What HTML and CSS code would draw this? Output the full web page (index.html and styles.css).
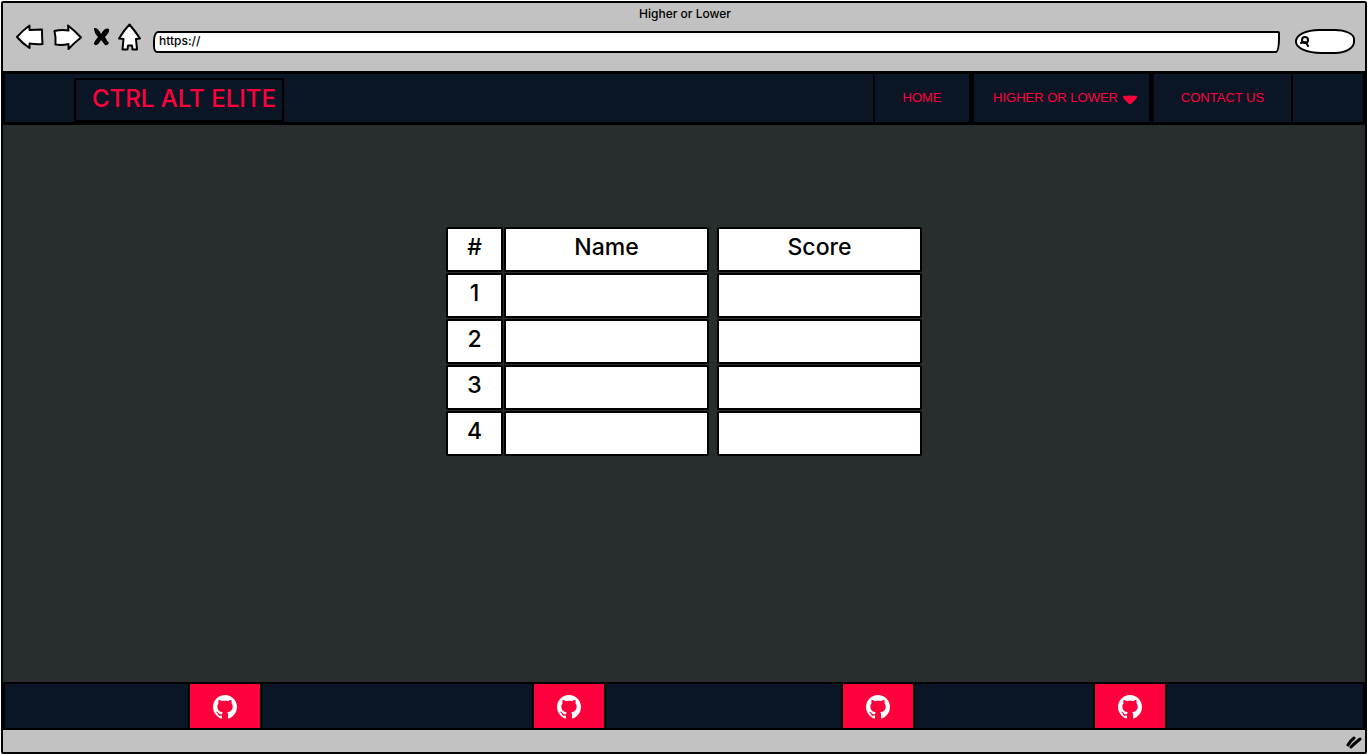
FILE: index.html
```html
<!DOCTYPE html>
<html lang="en">
<head>
<meta charset="utf-8">
<title>Higher or Lower</title>
<link rel="stylesheet" href="styles.css">
</head>
<body>
<svg class="defs" aria-hidden="true">
  <symbol id="github" viewBox="0 0 16 16"><path d="M8 0C3.58 0 0 3.58 0 8c0 3.54 2.29 6.53 5.47 7.59.4.07.55-.17.55-.38 0-.19-.01-.82-.01-1.49-2.01.37-2.53-.49-2.69-.94-.09-.23-.48-.94-.82-1.13-.28-.15-.68-.52-.01-.53.63-.01 1.08.58 1.23.82.72 1.21 1.87.87 2.33.66.07-.52.28-.87.51-1.07-1.78-.2-3.64-.89-3.64-3.95 0-.87.31-1.59.82-2.15-.08-.2-.36-1.02.08-2.12 0 0 .67-.21 2.2.82.64-.18 1.32-.27 2-.27s1.36.09 2 .27c1.53-1.04 2.2-.82 2.2-.82.44 1.1.16 1.92.08 2.12.51.56.82 1.27.82 2.15 0 3.07-1.87 3.75-3.65 3.95.29.25.54.73.54 1.48 0 1.07-.01 1.93-.01 2.2 0 .21.15.46.55.38A8.01 8.01 0 0 0 16 8c0-4.42-3.58-8-8-8z"/></symbol>
</svg>
<div class="window">
  <header class="chrome">
    <div class="chrome-title">Higher or Lower</div>
    <div class="toolbar">
      <button class="tool" aria-label="Back"><svg class="icon-arrow" viewBox="0 0 30 28"><path d="M2 14Q7 8 14.500 2.500L14.500 7L27 6.500Q27 14 27.500 21Q21 21.500 14.500 20.500L14.500 25Q7 20 2 14Z"/></svg></button>
      <button class="tool" aria-label="Forward"><svg class="icon-arrow" viewBox="0 0 30 28"><path d="M1.500 8Q8 6.500 15.500 7.500L15 2.500Q22 8 28 14.500Q21 20 15.500 26L15.500 21Q9 22.500 2.500 21.500Q3 14 1.500 8Z"/></svg></button>
      <button class="tool tool-stop" aria-label="Stop"><svg class="icon-stop" viewBox="0 0 18 22"><path d="M2 2Q6 1 9 8Q13 1 17 3Q18 6 13 11Q15 15 17 17Q15 20 13 19L9 14Q6 20 3 19Q0 18 6 11Q2 7 2 2Z"/></svg></button>
      <button class="tool" aria-label="Home"><svg class="icon-home" viewBox="0 0 24 30"><path d="M12.500 2.500Q18 9 23 16.500L19 17Q19.500 22 20 27.500L15.500 27.500L15 23.500L11 23.500L10.500 27.500L5.500 27.500Q6 22 6.500 17L2 16.500Q7 8 12.500 2.500Z"/></svg></button>
      <input class="address" type="text" value="https://" aria-label="Address">
      <label class="search">
        <svg class="icon-search" viewBox="0 0 12 14"><circle cx="6" cy="6" r="3"/><path d="M2 9L4 8M6 8L8 10L9 12"/></svg>
        <input class="search-input" type="text" aria-label="Search">
      </label>
    </div>
  </header>
  <nav class="navbar">
    <a class="brand" href="#">CTRL ALT ELITE</a>
    <div class="nav-links">
      <a class="nav-link nav-home" href="#">HOME</a>
      <a class="nav-link nav-game" href="#">HIGHER OR LOWER <svg class="icon-caret" viewBox="0 0 16 10"><path d="M1 1Q8 0 15 1Q16 3 9 9L7 9Q0 3 1 1Z"/></svg></a>
      <a class="nav-link nav-contact" href="#">CONTACT US</a>
    </div>
  </nav>
  <main class="content">
    <table class="scores">
      <thead>
        <tr><th scope="col">#</th><th scope="col">Name</th><th scope="col">Score</th></tr>
      </thead>
      <tbody>
        <tr><td>1</td><td></td><td></td></tr>
        <tr><td>2</td><td></td><td></td></tr>
        <tr><td>3</td><td></td><td></td></tr>
        <tr><td>4</td><td></td><td></td></tr>
      </tbody>
    </table>
  </main>
  <footer class="footer">
    <span></span>
    <a class="social" href="#" aria-label="GitHub"><svg class="icon-github"><use href="#github"/></svg></a>
    <span></span>
    <a class="social" href="#" aria-label="GitHub"><svg class="icon-github"><use href="#github"/></svg></a>
    <span></span>
    <a class="social" href="#" aria-label="GitHub"><svg class="icon-github"><use href="#github"/></svg></a>
    <span></span>
    <a class="social" href="#" aria-label="GitHub"><svg class="icon-github"><use href="#github"/></svg></a>
    <span></span>
  </footer>
  <div class="statusbar">
    <svg class="icon-grip" viewBox="0 0 18 14"><path d="M3 9Q5 5 9 2M6 11Q9 8 15 3"/></svg>
  </div>
</div>
</body>
</html>
```

FILE: styles.css
```css
* { box-sizing: border-box; }

body {
  margin: 0;
  background: #fff;
  color: #000;
  font-family: "Liberation Sans", Arial, sans-serif;
  font-size: 13px;
}

.defs { position: absolute; width: 0; height: 0; }
svg { display: block; flex: none; }

.window {
  display: flex;
  flex-direction: column;
  min-height: calc(100vh - 2px);
  margin: 1px 1px 0;
  border: 2px solid #000;
  border-radius: 2px;
  background: #282d2d;
}

.chrome {
  height: 68px;
  padding: 3px 10px 0 12px;
  background: #c2c2c2;
}

.chrome-title {
  font-family: Inter, sans-serif;
  font-size: 12px;
  font-weight: 500;
  line-height: 16px;
  text-align: center;
}

.toolbar {
  display: flex;
  align-items: center;
  height: 30px;
}

.tool {
  margin: 0 8px 0 0;
  padding: 0;
  border: 0;
  background: none;
}

.tool-stop { margin: 0 7px 0 1px; }

.tool path {
  fill: #fff;
  stroke: #000;
  stroke-width: 2px;
  stroke-linejoin: round;
}

.icon-arrow { width: 30px; height: 28px; }
.icon-home { width: 24px; height: 30px; }
.icon-stop { width: 18px; height: 22px; }
.tool .icon-stop path { fill: #000; stroke: none; }

.address {
  flex: 1;
  min-width: 0;
  height: 22px;
  margin: 9px 15px 0 4px;
  padding: 0 4px 2px;
  border: 2px solid #000;
  border-radius: 5px 2px 4px 4px / 10px 2px 14px 7px;
  background: #fff;
  color: #000;
  font-family: Inter, sans-serif;
  font-size: 12px;
  font-weight: 500;
}

.search {
  display: flex;
  align-items: center;
  width: 60px;
  height: 25px;
  margin-top: 8px;
  padding-left: 2px;
  border: 2px solid #000;
  border-radius: 24px 20px 20px 26px / 12px 10px 12px 12px;
  background: #fff;
}

.search-input {
  flex: 1;
  min-width: 0;
  padding: 0 8px 0 0;
  border: 0;
  background: none;
  outline: 0;
}

.icon-search {
  width: 12px;
  height: 14px;
  fill: none;
  stroke: #000;
  stroke-width: 2px;
  stroke-linecap: round;
}

.navbar {
  display: flex;
  align-items: center;
  justify-content: space-between;
  height: 54px;
  padding: 0 70px 0 69px;
  border: 3px solid #000;
  border-width: 3px 2px;
  background: #0a1526;
}

.brand {
  margin-top: 4px;
  padding: 1px 6px 3px 16px;
  border: 2px solid #000;
  border-radius: 2px;
  color: #ff003c;
  font-family: Inter, sans-serif;
  font-size: 24px;
  font-weight: 500;
  line-height: 36px;
  text-decoration: none;
}

.nav-links { display: flex; align-self: stretch; }

.nav-link {
  display: flex;
  align-items: center;
  justify-content: center;
  gap: 4px;
  padding-bottom: 2px;
  border: 2px solid #000;
  border-width: 0 2px;
  color: #ff003c;
  text-decoration: none;
}

.nav-home { width: 99px; border-right-width: 3px; }
.nav-game { width: 180px; padding-left: 8px; border-right-width: 3px; }
.nav-contact { width: 141px; }

.icon-caret { width: 16px; height: 10px; margin-top: 5px; fill: #ff003c; }

.content {
  flex: 1;
  display: flex;
  justify-content: center;
  align-items: flex-start;
  padding: 102px 16px 40px;
}

.scores {
  display: block;
  border-spacing: 0;
  font-family: Inter, sans-serif;
  font-size: 23px;
  font-weight: 500;
}

.scores tr {
  display: grid;
  grid-template-columns: 57px 205px 205px;
  column-gap: 1px;
  margin-bottom: 1px;
}

.scores th,
.scores td {
  height: 45px;
  padding: 2px 0;
  border: 2px solid #000;
  border-radius: 2px;
  background: #fff;
  font-weight: 500;
  line-height: 32px;
  text-align: center;
}

.scores tr { grid-template-columns: 57px 205px 6px 205px; }

.scores th:last-child,
.scores td:last-child { grid-column: 4; }

.footer {
  display: grid;
  grid-template-columns: 183fr 74px 270fr 74px 235fr 74px 178fr 74px 196fr;
  height: 48px;
  border: 2px solid #000;
  background: #0a1526;
}

.social {
  display: flex;
  align-items: center;
  justify-content: center;
  padding-top: 2px;
  border: 2px solid #000;
  border-width: 0 2px;
  background: #ff003c;
}

.icon-github { width: 24px; height: 24px; fill: #fff; }

.statusbar {
  display: flex;
  align-items: center;
  justify-content: flex-end;
  height: 22px;
  padding: 4px 2px 0 0;
  background: #c2c2c2;
}

.icon-grip {
  width: 18px;
  height: 14px;
  fill: none;
  stroke: #000;
  stroke-width: 3px;
  stroke-linecap: round;
}
```
